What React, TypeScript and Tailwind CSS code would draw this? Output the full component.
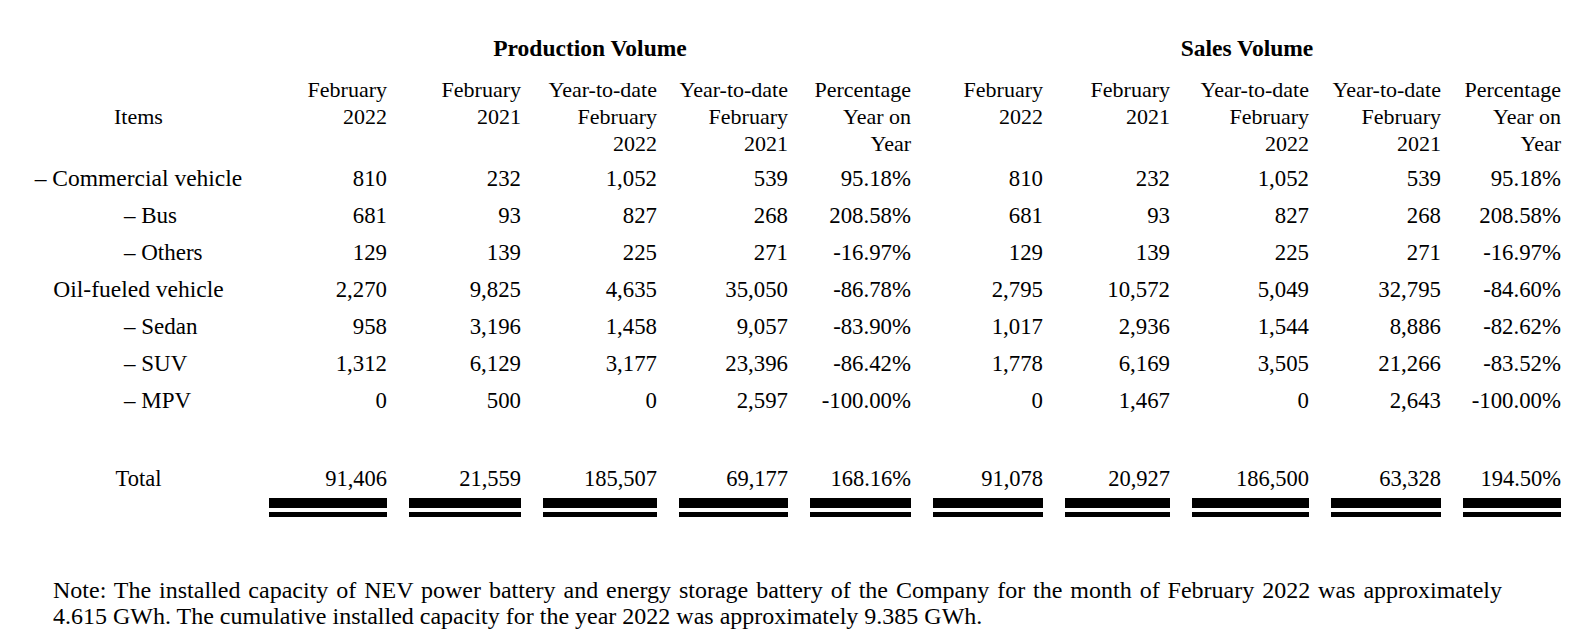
type Row = { label: string; sub: boolean; values: string[] };

const rows: Row[] = [
  {
    label: "– Commercial vehicle",
    sub: false,
    values: ["810", "232", "1,052", "539", "95.18%", "810", "232", "1,052", "539", "95.18%"],
  },
  {
    label: "– Bus",
    sub: true,
    values: ["681", "93", "827", "268", "208.58%", "681", "93", "827", "268", "208.58%"],
  },
  {
    label: "– Others",
    sub: true,
    values: ["129", "139", "225", "271", "-16.97%", "129", "139", "225", "271", "-16.97%"],
  },
  {
    label: "Oil-fueled vehicle",
    sub: false,
    values: ["2,270", "9,825", "4,635", "35,050", "-86.78%", "2,795", "10,572", "5,049", "32,795", "-84.60%"],
  },
  {
    label: "– Sedan",
    sub: true,
    values: ["958", "3,196", "1,458", "9,057", "-83.90%", "1,017", "2,936", "1,544", "8,886", "-82.62%"],
  },
  {
    label: "– SUV",
    sub: true,
    values: ["1,312", "6,129", "3,177", "23,396", "-86.42%", "1,778", "6,169", "3,505", "21,266", "-83.52%"],
  },
  {
    label: "– MPV",
    sub: true,
    values: ["0", "500", "0", "2,597", "-100.00%", "0", "1,467", "0", "2,643", "-100.00%"],
  },
];

const totals = ["91,406", "21,559", "185,507", "69,177", "168.16%", "91,078", "20,927", "186,500", "63,328", "194.50%"];

const heads = [
  ["February", "2022"],
  ["February", "2021"],
  ["Year-to-date", "February", "2022"],
  ["Year-to-date", "February", "2021"],
  ["Percentage", "Year on", "Year"],
];

const grid =
  "grid grid-cols-[247px_140px_134px_136px_131px_123px_132px_127px_139px_132px_120px]";

export default function App() {
  return (
    <div className="min-h-[640px] w-[1584px] bg-white pt-[35px] font-['Liberation_Serif','Times_New_Roman',serif] text-black">
      <div className={`${grid} text-[23.5px] leading-[27px] font-bold`}>
        <div />
        <div className="col-span-5 pl-[22px] text-center">Production Volume</div>
        <div className="col-span-5 pl-[22px] text-center">Sales Volume</div>
      </div>

      <div className={`${grid} mt-[14px] text-[22px] leading-[27px]`}>
        <div className="flex items-center justify-center pl-[30px]">Items</div>
        {[...heads, ...heads].map((h, i) => (
          <div key={i} className="pl-[22px] text-right">
            {h.map((line) => (
              <div key={line}>{line}</div>
            ))}
          </div>
        ))}
      </div>

      <div className="mt-[3px]">
        {rows.map((r) => (
          <div key={r.label} className={`${grid} h-[37px] text-[22.8px] leading-[37px]`}>
            {r.sub ? (
              <div className="pl-[124px] text-[23px]">{r.label}</div>
            ) : (
              <div className="pl-[30px] text-center text-[23.5px]">{r.label}</div>
            )}
            {r.values.map((v, i) => (
              <div key={i} className="pl-[22px] text-right">
                {v}
              </div>
            ))}
          </div>
        ))}
      </div>

      <div className={`${grid} mt-[41px] text-[22.5px] leading-[37px]`}>
        <div className="pl-[30px] text-center">Total</div>
        {totals.map((v, i) => (
          <div key={i} className="pl-[22px] text-right">
            <div>{v}</div>
            <div className="mt-px h-[10px] bg-black" />
            <div className="mt-[4px] h-[5px] bg-black" />
          </div>
        ))}
      </div>

      <div className="mt-[60px] w-[1502px] pl-[53px] text-[24px] leading-[26px]">
        <p className="text-justify [text-align-last:justify]">
          Note: The installed capacity of NEV power battery and energy storage battery of the Company for the month of
          February 2022 was approximately
        </p>
        <p>4.615 GWh. The cumulative installed capacity for the year 2022 was approximately 9.385 GWh.</p>
      </div>
    </div>
  );
}
